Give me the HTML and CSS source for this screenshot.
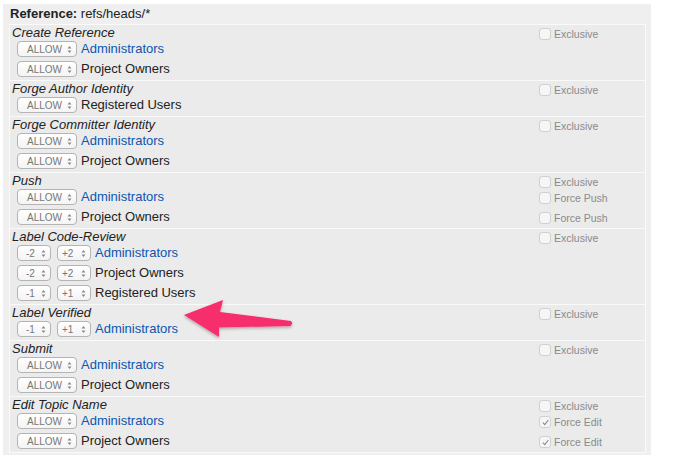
FILE: index.html
```html
<!DOCTYPE html>
<html>
<head>
<meta charset="utf-8">
<link rel="stylesheet" href="styles.css">
</head>
<body>
<div class="panel">
  <div class="heading"><b>Reference:</b> refs/heads/*</div>
  <div class="acl">
    <div class="section">
      <div class="line"><div class="title">Create Reference</div><div class="opt first"><span class="cb"></span>Exclusive</div></div>
      <div class="line"><div class="rule"><span class="sel allow">ALLOW<svg class="ud" viewBox="0 0 5 9"><path d="M0.5 3.6 L2.5 1 L4.5 3.6Z M0.5 5.4 L2.5 8 L4.5 5.4Z"/></svg></span><a class="name link">Administrators</a></div><div></div></div>
      <div class="line"><div class="rule"><span class="sel allow">ALLOW<svg class="ud" viewBox="0 0 5 9"><path d="M0.5 3.6 L2.5 1 L4.5 3.6Z M0.5 5.4 L2.5 8 L4.5 5.4Z"/></svg></span><span class="name">Project Owners</span></div><div></div></div>
    </div>
    <div class="section">
      <div class="line"><div class="title">Forge Author Identity</div><div class="opt first"><span class="cb"></span>Exclusive</div></div>
      <div class="line"><div class="rule"><span class="sel allow">ALLOW<svg class="ud" viewBox="0 0 5 9"><path d="M0.5 3.6 L2.5 1 L4.5 3.6Z M0.5 5.4 L2.5 8 L4.5 5.4Z"/></svg></span><span class="name">Registered Users</span></div><div></div></div>
    </div>
    <div class="section">
      <div class="line"><div class="title">Forge Committer Identity</div><div class="opt first"><span class="cb"></span>Exclusive</div></div>
      <div class="line"><div class="rule"><span class="sel allow">ALLOW<svg class="ud" viewBox="0 0 5 9"><path d="M0.5 3.6 L2.5 1 L4.5 3.6Z M0.5 5.4 L2.5 8 L4.5 5.4Z"/></svg></span><a class="name link">Administrators</a></div><div></div></div>
      <div class="line"><div class="rule"><span class="sel allow">ALLOW<svg class="ud" viewBox="0 0 5 9"><path d="M0.5 3.6 L2.5 1 L4.5 3.6Z M0.5 5.4 L2.5 8 L4.5 5.4Z"/></svg></span><span class="name">Project Owners</span></div><div></div></div>
    </div>
    <div class="section">
      <div class="line"><div class="title">Push</div><div class="opt first"><span class="cb"></span>Exclusive</div></div>
      <div class="line"><div class="rule"><span class="sel allow">ALLOW<svg class="ud" viewBox="0 0 5 9"><path d="M0.5 3.6 L2.5 1 L4.5 3.6Z M0.5 5.4 L2.5 8 L4.5 5.4Z"/></svg></span><a class="name link">Administrators</a></div><div class="opt"><span class="cb"></span>Force Push</div></div>
      <div class="line"><div class="rule"><span class="sel allow">ALLOW<svg class="ud" viewBox="0 0 5 9"><path d="M0.5 3.6 L2.5 1 L4.5 3.6Z M0.5 5.4 L2.5 8 L4.5 5.4Z"/></svg></span><span class="name">Project Owners</span></div><div class="opt"><span class="cb"></span>Force Push</div></div>
    </div>
    <div class="section">
      <div class="line"><div class="title">Label Code-Review</div><div class="opt first"><span class="cb"></span>Exclusive</div></div>
      <div class="line"><div class="rule"><span class="sel min">-2<svg class="ud" viewBox="0 0 5 9"><path d="M0.5 3.6 L2.5 1 L4.5 3.6Z M0.5 5.4 L2.5 8 L4.5 5.4Z"/></svg></span><span class="sel max">+2<svg class="ud" viewBox="0 0 5 9"><path d="M0.5 3.6 L2.5 1 L4.5 3.6Z M0.5 5.4 L2.5 8 L4.5 5.4Z"/></svg></span><a class="name link">Administrators</a></div><div></div></div>
      <div class="line"><div class="rule"><span class="sel min">-2<svg class="ud" viewBox="0 0 5 9"><path d="M0.5 3.6 L2.5 1 L4.5 3.6Z M0.5 5.4 L2.5 8 L4.5 5.4Z"/></svg></span><span class="sel max">+2<svg class="ud" viewBox="0 0 5 9"><path d="M0.5 3.6 L2.5 1 L4.5 3.6Z M0.5 5.4 L2.5 8 L4.5 5.4Z"/></svg></span><span class="name">Project Owners</span></div><div></div></div>
      <div class="line"><div class="rule"><span class="sel min">-1<svg class="ud" viewBox="0 0 5 9"><path d="M0.5 3.6 L2.5 1 L4.5 3.6Z M0.5 5.4 L2.5 8 L4.5 5.4Z"/></svg></span><span class="sel max">+1<svg class="ud" viewBox="0 0 5 9"><path d="M0.5 3.6 L2.5 1 L4.5 3.6Z M0.5 5.4 L2.5 8 L4.5 5.4Z"/></svg></span><span class="name">Registered Users</span></div><div></div></div>
    </div>
    <div class="section">
      <div class="line"><div class="title">Label Verified</div><div class="opt first"><span class="cb"></span>Exclusive</div></div>
      <div class="line"><div class="rule"><span class="sel min">-1<svg class="ud" viewBox="0 0 5 9"><path d="M0.5 3.6 L2.5 1 L4.5 3.6Z M0.5 5.4 L2.5 8 L4.5 5.4Z"/></svg></span><span class="sel max">+1<svg class="ud" viewBox="0 0 5 9"><path d="M0.5 3.6 L2.5 1 L4.5 3.6Z M0.5 5.4 L2.5 8 L4.5 5.4Z"/></svg></span><a class="name link">Administrators</a></div><div></div></div>
    </div>
    <div class="section">
      <div class="line"><div class="title">Submit</div><div class="opt first"><span class="cb"></span>Exclusive</div></div>
      <div class="line"><div class="rule"><span class="sel allow">ALLOW<svg class="ud" viewBox="0 0 5 9"><path d="M0.5 3.6 L2.5 1 L4.5 3.6Z M0.5 5.4 L2.5 8 L4.5 5.4Z"/></svg></span><a class="name link">Administrators</a></div><div></div></div>
      <div class="line"><div class="rule"><span class="sel allow">ALLOW<svg class="ud" viewBox="0 0 5 9"><path d="M0.5 3.6 L2.5 1 L4.5 3.6Z M0.5 5.4 L2.5 8 L4.5 5.4Z"/></svg></span><span class="name">Project Owners</span></div><div></div></div>
    </div>
    <div class="section">
      <div class="line"><div class="title">Edit Topic Name</div><div class="opt first"><span class="cb"></span>Exclusive</div></div>
      <div class="line"><div class="rule"><span class="sel allow">ALLOW<svg class="ud" viewBox="0 0 5 9"><path d="M0.5 3.6 L2.5 1 L4.5 3.6Z M0.5 5.4 L2.5 8 L4.5 5.4Z"/></svg></span><a class="name link">Administrators</a></div><div class="opt"><span class="cb"><svg class="tick" viewBox="0 0 10 10"><path d="M2 5.2 L4.2 7.4 L8.2 2.2"/></svg></span>Force Edit</div></div>
      <div class="line"><div class="rule"><span class="sel allow">ALLOW<svg class="ud" viewBox="0 0 5 9"><path d="M0.5 3.6 L2.5 1 L4.5 3.6Z M0.5 5.4 L2.5 8 L4.5 5.4Z"/></svg></span><span class="name">Project Owners</span></div><div class="opt"><span class="cb"><svg class="tick" viewBox="0 0 10 10"><path d="M2 5.2 L4.2 7.4 L8.2 2.2"/></svg></span>Force Edit</div></div>
    </div>
  </div>
</div>
<svg class="arrow" width="684" height="459" viewBox="0 0 684 459">
  <defs>
    <filter id="sh" x="-20%" y="-50%" width="140%" height="200%">
      <feDropShadow dx="0" dy="1.5" stdDeviation="1.5" flood-color="#000" flood-opacity="0.3"/>
    </filter>
  </defs>
  <path filter="url(#sh)" fill="#f72d6c" d="M184 315 L223 300 L220 312 L291 321 Q293.5 323.5 290.5 326 L219 327.5 L219 337 Z"/>
</svg>
</body>
</html>
```

FILE: styles.css
```css
body {
  margin: 0;
  font-family: "Liberation Sans", Arial, Helvetica, sans-serif;
  background: #ffffff;
  color: #222222;
}

.panel {
  margin: 4px 0 0 3px;
  width: 648px;
  height: 451px;
  box-sizing: border-box;
  background: #efefef;
  padding: 0 5px 0 6px;
}

.heading {
  height: 20px;
  line-height: 20px;
  font-size: 13px;
  padding-left: 1px;
  color: #222222;
}

.acl {
  border: 1px solid #fafafa;
  border-top: 0;
  background: #ebebeb;
}

.section {
  border-top: 1px solid #fafafa;
}

.line {
  display: grid;
  grid-template-columns: 529px 1fr;
}

.title {
  height: 15px;
  line-height: 15px;
  font-size: 13px;
  font-style: italic;
  padding-left: 2px;
  color: #222222;
}

.rule {
  height: 20px;
  display: flex;
  align-items: flex-start;
  padding-left: 7px;
}

.sel {
  margin-top: 1px;
  height: 16px;
  box-sizing: border-box;
  border: 1px solid #b4b4b4;
  border-radius: 4px;
  background: linear-gradient(#ffffff, #f4f4f4);
  display: flex;
  align-items: center;
  font-size: 10px;
  color: #777777;
}

.sel.allow {
  width: 60px;
  padding-left: 9px;
}

.sel.min {
  width: 34px;
  padding-left: 8px;
  margin-right: 6px;
}

.sel.max {
  width: 34px;
  padding-left: 4px;
}

.ud {
  width: 5px;
  height: 9px;
  margin-left: auto;
  margin-right: 4px;
  fill: #8a8a8a;
}

.name {
  margin-left: 4px;
  line-height: 18px;
  font-size: 13px;
  color: #222222;
}

.name.link {
  color: #0a56b0;
}

.opt {
  display: flex;
  align-items: center;
  gap: 3px;
  height: 12px;
  margin-top: 4px;
  font-size: 10.5px;
  color: #8a8a8a;
}

.opt.first {
  margin-top: 3px;
}

.cb {
  width: 12px;
  height: 12px;
  box-sizing: border-box;
  border: 1px solid #d0d0d0;
  border-radius: 3px;
  background: #f6f6f6;
  display: flex;
  align-items: center;
  justify-content: center;
}

.tick {
  width: 9px;
  height: 9px;
  fill: none;
  stroke: #8a8a8a;
  stroke-width: 1.2;
}

.arrow {
  position: absolute;
  left: 0;
  top: 0;
  pointer-events: none;
}
```
